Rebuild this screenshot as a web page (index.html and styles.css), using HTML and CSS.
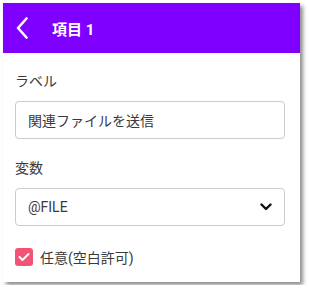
FILE: index.html
```html
<!DOCTYPE html>
<html lang="ja">

<head>
  <meta charset="UTF-8">
  <meta name="viewport" content="width=device-width, initial-scale=1.0">
  <title>項目 1</title>
  <link rel="stylesheet" href="styles.css">
</head>

<body>
<div class="panel">
  <div class="panel_header">
    <svg class="back_icon" width="12" height="22" viewBox="0 0 12 22">
      <path d="M10.5 1.5 L2 11 L10.5 20.5" fill="none" stroke="#fff" stroke-width="2.6" stroke-linecap="round" stroke-linejoin="round"/>
    </svg>
    <h1>項目 1</h1>
  </div>
  <div class="panel_body">
    <div class="field">
      <label>ラベル</label>
      <div class="field_box">関連ファイルを送信</div>
    </div>
    <div class="field">
      <label>変数</label>
      <div class="field_box field_select">
        <span>@FILE</span>
        <svg width="12" height="8" viewBox="0 0 12 8">
          <path d="M1.5 1.5 L6 6 L10.5 1.5" fill="none" stroke="#111" stroke-width="2.4" stroke-linecap="round" stroke-linejoin="round"/>
        </svg>
      </div>
    </div>
    <div class="check_row">
      <span class="check_box">
        <svg width="12" height="10" viewBox="0 0 12 10">
          <path d="M1.5 5 L4.5 8 L10.5 2" fill="none" stroke="#fff" stroke-width="2" stroke-linecap="round" stroke-linejoin="round"/>
        </svg>
      </span>
      <span>任意(空白許可)</span>
    </div>
  </div>
</div>
</body>

</html>
```

FILE: styles.css
```css
body,
h1 {
  padding: 0;
  margin: 0;
}

body {
  background: #fff;
  font-family: Roboto, "Noto Sans CJK JP", sans-serif;
  font-size: 14px;
  color: #3a3a3a;
}

.panel {
  margin: 3px;
  width: 297px;
  height: 279px;
  background: #fff;
  box-shadow: 3px 3px 4px rgba(0, 0, 0, 0.45);
}

.panel_header {
  height: 50px;
  background: #8000ff;
  display: flex;
  align-items: center;
  padding-left: 13px;
}

.panel_header h1 {
  margin-left: 24px;
  color: #fff;
  font-size: 15px;
  font-weight: bold;
}

.panel_body {
  padding: 0 15px 0 12px;
}

.field {
  padding-top: 18px;
}

.field + .field {
  padding-top: 19px;
}

.field label {
  display: block;
  line-height: 20px;
  margin-bottom: 10px;
}

.field_box {
  height: 38px;
  box-sizing: border-box;
  border: 1px solid #ccc;
  border-radius: 4px;
  padding: 0 12px;
  display: flex;
  align-items: center;
}

.field_select {
  justify-content: space-between;
}

.check_row {
  display: flex;
  align-items: center;
  margin-top: 21px;
}

.check_box {
  width: 18px;
  height: 18px;
  border-radius: 3px;
  background: #f25476;
  display: flex;
  align-items: center;
  justify-content: center;
  margin-right: 7px;
}
```
